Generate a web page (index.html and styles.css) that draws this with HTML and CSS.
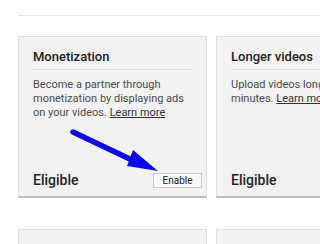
FILE: index.html
```html
<!DOCTYPE html>
<html lang="en">
<head>
  <meta charset="UTF-8">
  <meta name="viewport" content="width=device-width, initial-scale=1.0">
  <title>Features</title>
  <link rel="stylesheet" href="styles.css">
</head>

<body>
  <div class="top-line"></div>

  <div class="cards">
    <div class="card">
      <div class="card-title">Monetization</div>
      <p class="card-text">Become a partner through monetization by displaying ads on your videos. <a href="#">Learn more</a></p>
      <div class="card-foot">
        <span class="status">Eligible</span>
        <button class="enable">Enable</button>
      </div>
      <!-- hand drawn arrow over the card -->
      <svg class="arrow" width="100" height="50" viewBox="0 0 100 50">
        <line x1="3" y1="3" x2="64" y2="32" stroke="#0a0ae6" stroke-width="5.5" stroke-linecap="round"/>
        <polygon points="63,21 57,37 88,42" fill="#0a0ae6"/>
      </svg>
    </div>

    <div class="card">
      <div class="card-title">Longer videos</div>
      <p class="card-text">Upload videos longer than 15 minutes. <a href="#">Learn more</a></p>
      <div class="card-foot">
        <span class="status">Eligible</span>
      </div>
    </div>

    <div class="card"></div>
    <div class="card"></div>
  </div>
</body>
</html>
```

FILE: styles.css
```css
html {
  overflow: hidden;
}

body {
  font-family: Roboto, "Liberation Sans", Arial, sans-serif;
  margin: 0;
  padding-left: 18px;
  background: white;
  color: #333;
  overflow: hidden;
  height: 244px;
}

.top-line {
  margin-top: 15px;
  height: 1px;
  background: #e3e3e3;
}

.cards {
  margin-top: 20px;
  display: grid;
  grid-template-columns: 189px 189px;
  column-gap: 9px;
  row-gap: 31px;
}

.card {
  position: relative;
  box-sizing: border-box;
  height: 162px;
  background: #f2f2f2;
  border: 1px solid #dedede;
  border-bottom: 2px solid #bdbdbd;
  padding: 12px 14px 8px 14px;
  display: flex;
  flex-direction: column;
}

.card-title {
  font-size: 13px;
  font-weight: 500;
  color: #222;
  line-height: 16px;
  padding-bottom: 4px;
  border-bottom: 1px solid #dcdcdc;
  white-space: nowrap;
}

.card-text {
  margin: 8px 0 0 0;
  font-size: 11px;
  line-height: 14px;
  color: #4a4a4a;
}

.card-text a {
  color: #333;
  text-decoration: underline;
}

.card-foot {
  margin-top: auto;
  display: flex;
  justify-content: space-between;
  align-items: center;
  margin-right: -10px;
}

.status {
  font-size: 14px;
  font-weight: 500;
  color: #222;
}

.enable {
  font-family: inherit;
  font-size: 10px;
  color: #222;
  background: #f8f8f8;
  border: 1px solid #c8c8c8;
  padding: 0 8px;
  height: 15px;
  width: 49px;
  cursor: pointer;
}

.arrow {
  position: absolute;
  left: 51px;
  top: 92px;
}
```
